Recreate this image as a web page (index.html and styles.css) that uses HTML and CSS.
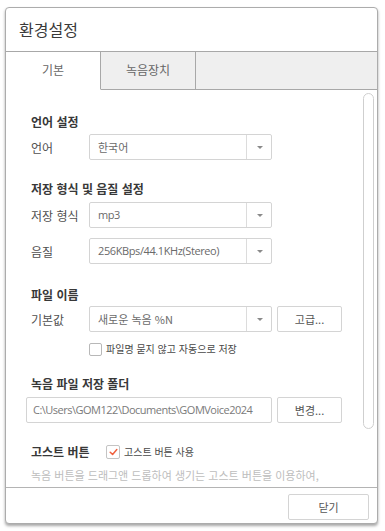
FILE: index.html
```html
<!DOCTYPE html>
<html lang="ko">
<head>
<meta charset="utf-8">
<title>환경설정</title>
<link rel="stylesheet" href="styles.css">
</head>
<body>
<div class="window">
  <div class="titlebar">환경설정</div>
  <div class="tabs">
    <div class="tab active">기본</div>
    <div class="tab">녹음장치</div>
    <div class="tab-rest"></div>
  </div>
  <div class="body">
    <div class="content">
      <div class="heading first">언어 설정</div>
      <div class="row r3">
        <span class="label">언어</span>
        <div class="select"><span class="value">한국어</span><span class="arrow"></span></div>
      </div>

      <div class="heading h20">저장 형식 및 음질 설정</div>
      <div class="row r4">
        <span class="label">저장 형식</span>
        <div class="select"><span class="value latin">mp3</span><span class="arrow"></span></div>
      </div>
      <div class="row r10">
        <span class="label">음질</span>
        <div class="select"><span class="value latin">256KBps/44.1KHz(Stereo)</span><span class="arrow"></span></div>
      </div>

      <div class="heading h22">파일 이름</div>
      <div class="row r2">
        <span class="label">기본값</span>
        <div class="select"><span class="value">새로운 녹음 %N</span><span class="arrow"></span></div>
        <button class="btn side">고급...</button>
      </div>
      <div class="check-row">
        <span class="checkbox"></span>
        <span class="check-text">파일명 묻지 않고 자동으로 저장</span>
      </div>

      <div class="heading h19">녹음 파일 저장 폴더</div>
      <div class="row r4 path-row">
        <div class="path latin">C:\Users\GOM122\Documents\GOMVoice2024</div>
        <button class="btn side">변경...</button>
      </div>

      <div class="ghost-row">
        <span class="heading ghost-label">고스트 버튼</span>
        <span class="checkbox checked">
          <svg width="9" height="8" viewBox="0 0 9 8"><path d="M1.2 4.2 L3.6 6.4 L7.8 1.6" fill="none" stroke="#f0603e" stroke-width="1.5" stroke-linecap="round" stroke-linejoin="round"/></svg>
        </span>
        <span class="check-text">고스트 버튼 사용</span>
      </div>
      <div class="desc">녹음 버튼을 드래그앤 드롭하여 생기는 고스트 버튼을 이용하여,</div>
    </div>
    <div class="scrollbar"></div>
  </div>
  <div class="footer">
    <button class="btn close">닫기</button>
  </div>
</div>
</body>
</html>
```

FILE: styles.css
```css
* { box-sizing: border-box; }
html, body { margin: 0; padding: 0; background: #ffffff; }
body {
  font-family: "Noto Sans CJK KR", "Noto Sans", sans-serif;
  color: #444;
  width: 385px;
  height: 531px;
  overflow: hidden;
}
.window {
  margin: 7px 0 0 5px;
  width: 373px;
  height: 517px;
  border: 1px solid #acacac;
  border-radius: 4px;
  background: #fff;
  box-shadow: 0 2px 3px rgba(0,0,0,0.35);
  display: flex;
  flex-direction: column;
  overflow: hidden;
}
.titlebar {
  height: 44px;
  flex: none;
  border-bottom: 1px solid #a8a8a8;
  padding-left: 13px;
  font-size: 16px;
  line-height: 42px;
  color: #3a3a3a;
}
.tabs {
  height: 38px;
  flex: none;
  display: flex;
}
.tab {
  width: 95px;
  border-right: 1px solid #a8a8a8;
  border-bottom: 1px solid #a8a8a8;
  background: #efefef;
  text-align: center;
  font-size: 12px;
  line-height: 36px;
  color: #666;
}
.tab.active {
  background: #fff;
  border-bottom-color: #fff;
}
.tab-rest {
  flex: 1;
  background: #efefef;
  border-bottom: 1px solid #a8a8a8;
}
.body {
  flex: 1;
  display: flex;
  overflow: hidden;
}
.content {
  flex: 1;
  padding: 23px 0 0 20px;
  overflow: hidden;
}
.scrollbar {
  flex: none;
  width: 11px;
  height: 336px;
  margin: 3px 3px 0 0;
  border: 1px solid #cfcfcf;
  border-radius: 6px;
  background: #fff;
}
.heading {
  font-size: 12px;
  font-weight: bold;
  color: #383838;
  line-height: 18px;
  height: 18px;
  padding-left: 5px;
}
.h20 { margin-top: 20px; }
.h22 { margin-top: 22px; }
.h19 { margin-top: 19px; }
.row {
  display: flex;
  align-items: center;
  height: 26px;
}
.r2 { margin-top: 2px; }
.r3 { margin-top: 3px; }
.r4 { margin-top: 4px; }
.r10 { margin-top: 10px; }
.label {
  width: 63px;
  padding-left: 5px;
  font-size: 12px;
  color: #505050;
  flex: none;
}
.select {
  width: 183px;
  height: 26px;
  border: 1px solid #d4d4d4;
  border-radius: 2px;
  display: flex;
  align-items: stretch;
  flex: none;
}
.value {
  flex: 1;
  padding-left: 8px;
  font-size: 11px;
  line-height: 24px;
  color: #6a6a6a;
  white-space: nowrap;
  overflow: hidden;
}
.latin {
  font-family: "Open Sans", "Noto Sans CJK KR", sans-serif;
  letter-spacing: -0.4px;
}
.arrow {
  width: 25px;
  flex: none;
  border-left: 1px solid #dcdcdc;
  position: relative;
}
.arrow::after {
  content: "";
  position: absolute;
  left: 10px;
  top: 11px;
  border-left: 3px solid transparent;
  border-right: 3px solid transparent;
  border-top: 3px solid #8a8a8a;
}
.btn {
  height: 26px;
  border: 1px solid #d4d4d4;
  border-radius: 2px;
  background: #fff;
  font-family: "Noto Sans CJK KR", sans-serif;
  font-size: 11px;
  color: #555;
  padding: 0;
}
.side {
  width: 65px;
  margin-left: 5px;
  flex: none;
}
.check-row {
  margin-top: 10px;
  height: 14px;
  display: flex;
  align-items: center;
  padding-left: 63px;
}
.checkbox {
  width: 13px;
  height: 13px;
  border: 1px solid #b8b8b8;
  border-radius: 2px;
  flex: none;
  display: flex;
  align-items: center;
  justify-content: center;
  background: #fff;
}
.checkbox.checked {
  width: 14px;
  height: 14px;
  border-color: #c4c4c4;
}
.check-text {
  margin-left: 4px;
  font-size: 10px;
  color: #484848;
  line-height: 14px;
  white-space: nowrap;
}
.path {
  width: 246px;
  height: 26px;
  border: 1px solid #d4d4d4;
  border-radius: 2px;
  padding-left: 6px;
  font-size: 11px;
  line-height: 24px;
  color: #7a7a7a;
  white-space: nowrap;
  overflow: hidden;
  flex: none;
}
.path.latin {
  letter-spacing: -0.5px;
}
.ghost-row {
  margin-top: 20px;
  height: 18px;
  display: flex;
  align-items: center;
}
.ghost-label {
  width: 80px;
  flex: none;
}
.desc {
  margin-top: 5px;
  padding-left: 5px;
  font-size: 11px;
  line-height: 18px;
  color: #bdbdbd;
  white-space: nowrap;
}
.footer {
  height: 36px;
  flex: none;
  border-top: 1px solid #b4b4b4;
  display: flex;
  justify-content: flex-end;
  align-items: flex-start;
  padding: 6px 8px 0 0;
}
.close {
  width: 81px;
  height: 26px;
  font-size: 11px;
}
```
